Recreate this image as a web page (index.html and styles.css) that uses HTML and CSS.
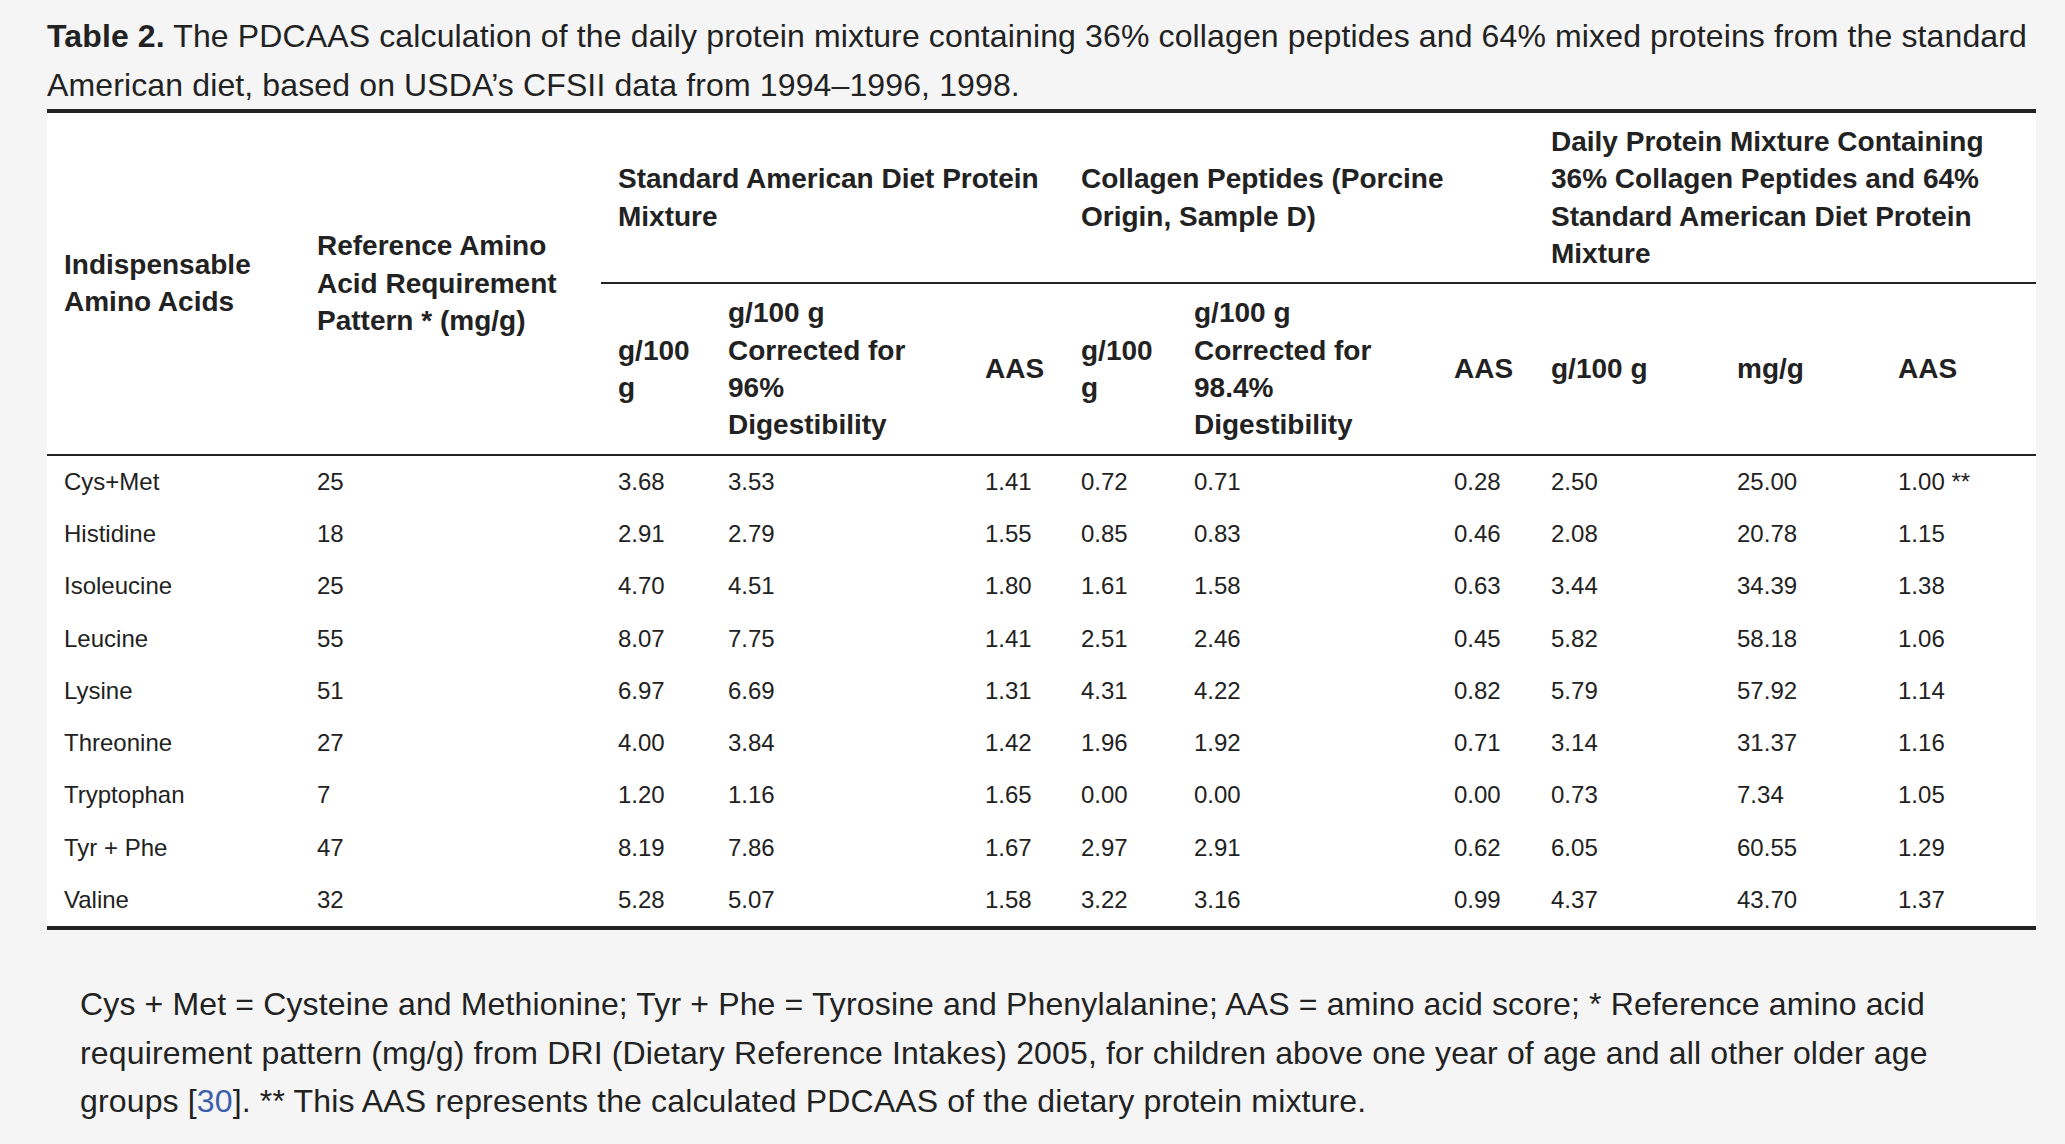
FILE: index.html
```html
<!DOCTYPE html>
<html lang="en">
<head>
<meta charset="utf-8">
<title>Table 2. PDCAAS calculation</title>
<link rel="stylesheet" href="styles.css">
</head>
<body>
<div class="wrap">
  <div class="caption"><b>Table 2.</b> The PDCAAS calculation of the daily protein mixture containing 36% collagen peptides and 64% mixed proteins from the standard American diet, based on USDA’s CFSII data from 1994–1996, 1998.</div>
  <table class="data">
    <colgroup>
      <col class="c1"><col class="c2"><col class="c3"><col class="c4"><col class="c5"><col class="c6"><col class="c7"><col class="c8"><col class="c9"><col class="c10"><col class="c11">
    </colgroup>
    <thead>
      <tr>
        <th rowspan="2" class="span">Indispensable Amino Acids</th>
        <th rowspan="2" class="span">Reference Amino Acid Requirement Pattern * (mg/g)</th>
        <th colspan="3" class="group">Standard American Diet Protein Mixture</th>
        <th colspan="3" class="group">Collagen Peptides (Porcine Origin, Sample D)</th>
        <th colspan="3" class="group">Daily Protein Mixture Containing 36% Collagen Peptides and 64% Standard American Diet Protein Mixture</th>
      </tr>
      <tr>
        <th class="sub">g/100 g</th>
        <th class="sub">g/100 g<br>Corrected for<br>96%<br>Digestibility</th>
        <th class="sub">AAS</th>
        <th class="sub">g/100 g</th>
        <th class="sub">g/100 g<br>Corrected for<br>98.4%<br>Digestibility</th>
        <th class="sub">AAS</th>
        <th class="sub">g/100 g</th>
        <th class="sub">mg/g</th>
        <th class="sub">AAS</th>
      </tr>
    </thead>
    <tbody>
      <tr><td>Cys+Met</td><td>25</td><td>3.68</td><td>3.53</td><td>1.41</td><td>0.72</td><td>0.71</td><td>0.28</td><td>2.50</td><td>25.00</td><td>1.00 **</td></tr>
      <tr><td>Histidine</td><td>18</td><td>2.91</td><td>2.79</td><td>1.55</td><td>0.85</td><td>0.83</td><td>0.46</td><td>2.08</td><td>20.78</td><td>1.15</td></tr>
      <tr><td>Isoleucine</td><td>25</td><td>4.70</td><td>4.51</td><td>1.80</td><td>1.61</td><td>1.58</td><td>0.63</td><td>3.44</td><td>34.39</td><td>1.38</td></tr>
      <tr><td>Leucine</td><td>55</td><td>8.07</td><td>7.75</td><td>1.41</td><td>2.51</td><td>2.46</td><td>0.45</td><td>5.82</td><td>58.18</td><td>1.06</td></tr>
      <tr><td>Lysine</td><td>51</td><td>6.97</td><td>6.69</td><td>1.31</td><td>4.31</td><td>4.22</td><td>0.82</td><td>5.79</td><td>57.92</td><td>1.14</td></tr>
      <tr><td>Threonine</td><td>27</td><td>4.00</td><td>3.84</td><td>1.42</td><td>1.96</td><td>1.92</td><td>0.71</td><td>3.14</td><td>31.37</td><td>1.16</td></tr>
      <tr><td>Tryptophan</td><td>7</td><td>1.20</td><td>1.16</td><td>1.65</td><td>0.00</td><td>0.00</td><td>0.00</td><td>0.73</td><td>7.34</td><td>1.05</td></tr>
      <tr><td>Tyr + Phe</td><td>47</td><td>8.19</td><td>7.86</td><td>1.67</td><td>2.97</td><td>2.91</td><td>0.62</td><td>6.05</td><td>60.55</td><td>1.29</td></tr>
      <tr><td>Valine</td><td>32</td><td>5.28</td><td>5.07</td><td>1.58</td><td>3.22</td><td>3.16</td><td>0.99</td><td>4.37</td><td>43.70</td><td>1.37</td></tr>
    </tbody>
  </table>
  <div class="foot">Cys + Met = Cysteine and Methionine; Tyr + Phe = Tyrosine and Phenylalanine; AAS = amino acid score; * Reference amino acid requirement pattern (mg/g) from DRI (Dietary Reference Intakes) 2005, for children above one year of age and all other older age groups [<a href="#b30" class="ref">30</a>]. ** This AAS represents the calculated PDCAAS of the dietary protein mixture.</div>
</div>
</body>
</html>
```

FILE: styles.css
```css
html, body {
  margin: 0;
  padding: 0;
  background: #f5f5f5;
}
body {
  font-family: "Liberation Sans", Arial, Helvetica, sans-serif;
  color: #222222;
}
.wrap {
  width: 1989px;
  margin-left: 47px;
}
.caption {
  font-size: 32px;
  line-height: 48.5px;
  letter-spacing: 0.13px;
  padding-top: 12px;
}
.caption b {
  font-weight: 700;
}
.data {
  width: 1989px;
  table-layout: fixed;
  border-collapse: separate;
  border-spacing: 0;
  background: #ffffff;
  border-top: 4px solid #222222;
  border-bottom: 4px solid #222222;
}
.c1 { width: 253px; }
.c2 { width: 301px; }
.c3 { width: 110px; }
.c4 { width: 257px; }
.c5 { width: 96px; }
.c6 { width: 113px; }
.c7 { width: 260px; }
.c8 { width: 97px; }
.c9 { width: 186px; }
.c10 { width: 161px; }
.c11 { width: 155px; }
.data th {
  font-size: 28px;
  font-weight: 700;
  line-height: 37.33px;
  text-align: left;
  vertical-align: middle;
  padding: 0 12px 0 17px;
}
.data th.group {
  padding-top: 10px;
  padding-bottom: 10px;
  border-bottom: 2px solid #222222;
}
.data th.sub {
  padding-top: 10px;
  padding-bottom: 10px;
  border-bottom: 2px solid #222222;
}
.data th.span {
  border-bottom: 2px solid #222222;
}
.data td {
  font-size: 24px;
  line-height: 36.3px;
  padding: 8px 12px 8px 17px;
  text-align: left;
  vertical-align: middle;
  white-space: nowrap;
}
.foot {
  font-size: 32px;
  line-height: 48.5px;
  letter-spacing: 0.15px;
  margin-top: 50px;
  padding: 0 33px;
}
.ref {
  color: #3b5faa;
  text-decoration: none;
}
```
